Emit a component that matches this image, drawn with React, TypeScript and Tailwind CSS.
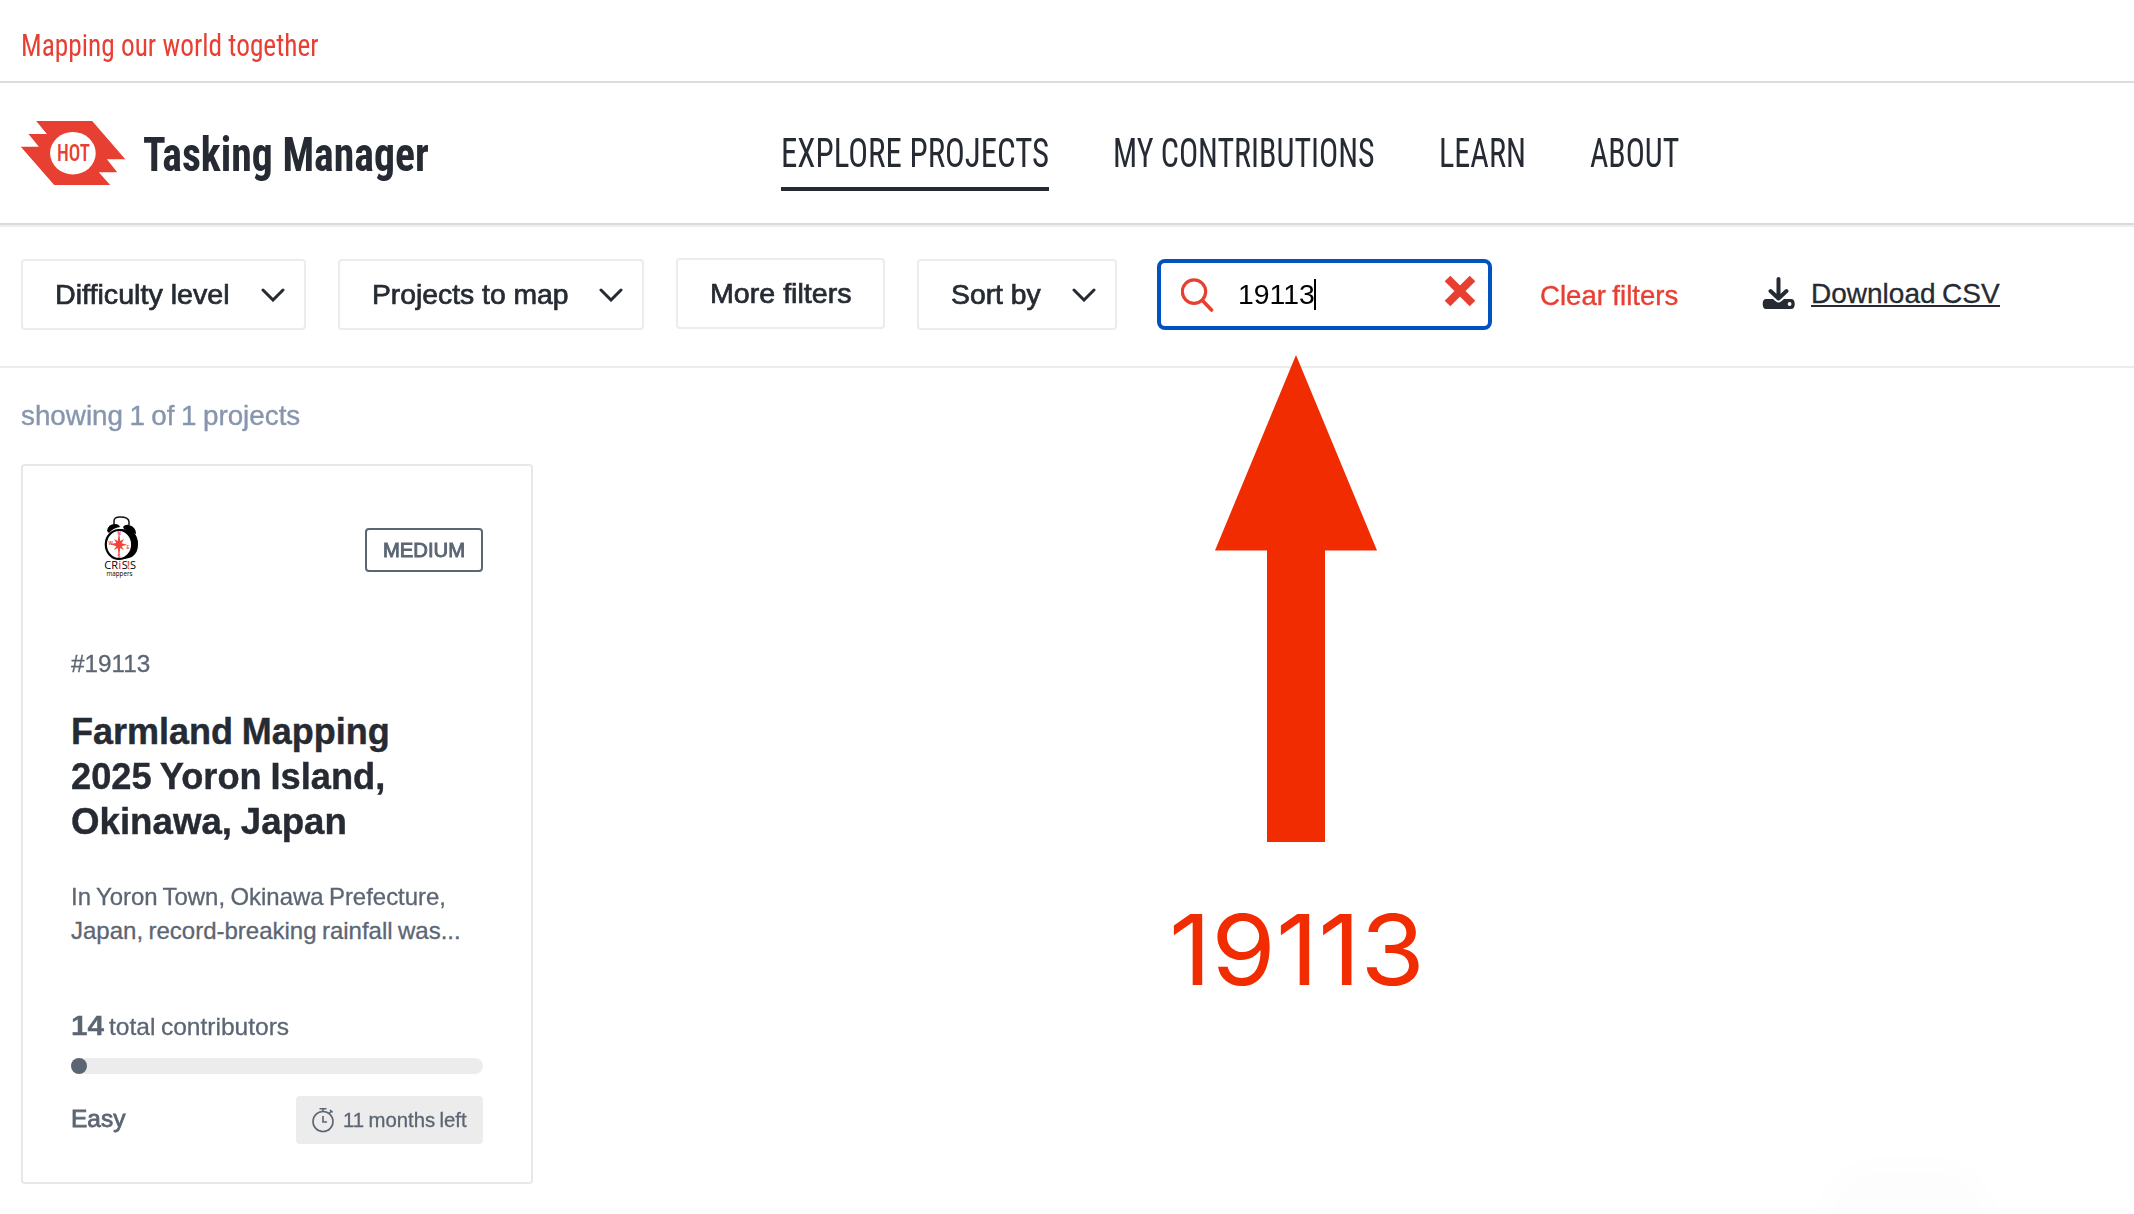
import { useLayoutEffect, useRef, useState, type ReactNode } from "react";

/* Renders a line of text stretched or condensed horizontally to a given width. */
function Fit({ width, className = "", children }: { width: number; className?: string; children: ReactNode }) {
  const ref = useRef<HTMLSpanElement>(null);
  const [scale, setScale] = useState(1);
  useLayoutEffect(() => {
    if (ref.current) setScale(width / ref.current.offsetWidth);
  }, [width]);
  return (
    <span className="block shrink-0" style={{ width }}>
      <span
        ref={ref}
        className={`inline-block origin-left whitespace-pre align-top ${className}`}
        style={{ transform: `scaleX(${scale})` }}
      >
        {children}
      </span>
    </span>
  );
}

const condensed = "font-['Roboto',sans-serif] [font-stretch:75%] [word-spacing:0px] [-webkit-text-stroke:0px]";

function HotLogo() {
  return (
    <svg className="h-16 w-[105px] shrink-0" viewBox="21.5 121 105 64">
      <path
        fill="#e83f33"
        d="M36.7 121H92.7L125.8 159.3H107.4L117.7 172.3H99.3L110.7 185H54.7L21.3 146.7H39.4L29 134H47.4Z"
      />
      <ellipse cx="73.4" cy="153.2" rx="22.8" ry="21.2" fill="#fff" />
      <text
        x="57.5"
        y="161.2"
        textLength="33"
        lengthAdjust="spacingAndGlyphs"
        fill="#e83f33"
        className="font-['Roboto',sans-serif] text-[23px] font-medium [font-stretch:75%]"
      >
        HOT
      </text>
    </svg>
  );
}

function Chevron() {
  return (
    <svg className="h-[14px] w-[24px] shrink-0" viewBox="0 0 24 14" fill="none" stroke="#262b33" strokeWidth="3">
      <path d="M2 2L12 12L22 2" strokeLinecap="round" />
    </svg>
  );
}

function Dropdown({ label, textWidth, className }: { label: string; textWidth: number; className: string }) {
  return (
    <button className={`flex h-[71px] items-center justify-between rounded-[4px] border-2 border-[#ececec] pr-[19px] ${className}`}>
      <Fit width={textWidth} className="text-[28px] leading-[70px] [-webkit-text-stroke:0.7px_#262b33]">
        {label}
      </Fit>
      <Chevron />
    </button>
  );
}

function CrisisMappersLogo() {
  return (
    <svg className="ml-[33px] h-[62px] w-[38px]" viewBox="0 0 38 62">
      <path d="M10 9V5Q10 1 16 1Q25 1 25 6V9" fill="none" stroke="#111" strokeWidth="1.5" />
      <path d="M3 15Q4 8 11 8Q15 8 16 11Q9 12 5 17Z" fill="#000" />
      <path d="M19 11Q21 8 25 9Q32 11 32 18L28 17Q24 14 20 13Z" fill="#000" />
      <path d="M15 13Q34 12 34 28Q34 43 18 43Z" fill="#000" />
      <ellipse cx="15" cy="28.5" rx="13.2" ry="14.5" fill="#fff" stroke="#000" strokeWidth="2.2" />
      <path
        fill="#f04438"
        d="M15 15L16.2 25L20 23L17.6 27.2L23 28.7L17.6 30.2L20 34L16.2 32L15 43L13.8 32L10 34L12.3 30.2L6 28L12.3 27L10 23L13.8 25Z"
      />
      <g fill="#f04438" className="font-['Liberation_Sans',sans-serif] text-[4.5px] font-bold">
        <text x="13.4" y="19">N</text>
        <text x="4.5" y="29">W</text>
        <text x="22.4" y="32.5">E</text>
        <text x="13.6" y="42">S</text>
      </g>
      <g className="font-['Open_Sans',sans-serif] text-[11px] [-webkit-text-stroke:0.3px_#000]">
        <text x="0.3" y="53">CR</text>
        <text x="17.8" y="53">S</text>
        <text x="26" y="53">S</text>
      </g>
      <g fill="#f04438" className="font-['Open_Sans',sans-serif] text-[11px] font-semibold [-webkit-text-stroke:0.3px_#f04438]">
        <text x="14.2" y="53">i</text>
        <text x="23" y="53">!</text>
      </g>
      <text
        x="2.5"
        y="59.5"
        textLength="26"
        lengthAdjust="spacingAndGlyphs"
        className="font-['Open_Sans',sans-serif] text-[7.5px] [-webkit-text-stroke:0.2px_#000]"
      >
        mappers
      </text>
    </svg>
  );
}

const navItems = [
  { label: "EXPLORE PROJECTS", width: 268, active: true },
  { label: "MY CONTRIBUTIONS", width: 262, active: false },
  { label: "LEARN", width: 87, active: false },
  { label: "ABOUT", width: 89, active: false },
];

function Header() {
  return (
    <header>
      <div className={`flex h-[83px] items-center border-b-2 border-[#dcdcdc] pt-[9px] pl-[21px] text-[32px] text-[#e83f33] ${condensed}`}>
        <Fit width={298}>Mapping our world together</Fit>
      </div>
      <div className="flex h-[142px] items-center border-b-2 border-[#d9dbda] pl-[21px] shadow-[0_2px_0_#eeeeee]">
        <HotLogo />
        <div className={`mt-[3px] ml-[17px] text-[48px] leading-[60px] font-bold ${condensed}`}>
          <Fit width={286}>Tasking Manager</Fit>
        </div>
        <nav className={`mt-[37px] ml-[352px] flex gap-[64px] self-start text-[40px] ${condensed}`}>
          {navItems.map((n) => (
            <a key={n.label} className={`h-[71px] leading-[68px] ${n.active ? "border-b-4 border-[#262b33]" : ""}`}>
              <Fit width={n.width}>{n.label}</Fit>
            </a>
          ))}
        </nav>
      </div>
    </header>
  );
}

function Filters() {
  return (
    <div className="mt-[2px] flex h-[141px] items-start border-b-2 border-[#ececec] pt-[32px] pl-[21px]">
      <Dropdown label="Difficulty level" textWidth={175} className="w-[285px] pl-[30px]" />
      <Dropdown label="Projects to map" textWidth={197} className="ml-[32px] w-[306px] pl-[31px]" />
      <button className="-mt-px ml-[32px] h-[71px] w-[209px] rounded-[4px] border-2 border-[#ececec] pl-[32px] text-left">
        <Fit width={141} className="text-[28px] leading-[68px] [-webkit-text-stroke:0.7px_#262b33]">
          More filters
        </Fit>
      </button>
      <Dropdown label="Sort by" textWidth={90} className="ml-[32px] w-[200px] pl-[31px]" />
      <div className="ml-[40px] flex h-[71px] w-[335px] items-center rounded-[8px] border-4 border-[#0053bf] bg-white pl-[20px]">
        <svg className="h-[34px] w-[34px]" viewBox="0 0 34 34" fill="none" stroke="#e83f33">
          <circle cx="13" cy="13.6" r="11.7" strokeWidth="3.2" />
          <path d="M21.5 22.5L30.5 32" strokeWidth="3.6" strokeLinecap="round" />
        </svg>
        <span className="ml-[23px]">
          <Fit width={77} className="text-[28px] leading-[64px] text-black">
            19113
          </Fit>
        </span>
        <span className="-ml-px h-[31px] w-[2px] bg-black" />
        <svg className="mb-[7px] ml-[128px] h-8 w-8" viewBox="0 0 32 32" stroke="#e83f33" strokeWidth="8">
          <path d="M3.5 3.5L28.5 28.5M28.5 3.5L3.5 28.5" />
        </svg>
      </div>
      <span className="ml-[48px] text-[28px] leading-[73px] text-[#e83f33] [-webkit-text-stroke:0.4px_#e83f33]">
        <Fit width={138}>Clear filters</Fit>
      </span>
      <svg className="mt-[18px] ml-[84px] h-[33px] w-[33px]" viewBox="0 0 33 33">
        <path
          fill="#262b33"
          d="M4 22H11L14 24.6Q16.5 26.4 19 24.6L22 22H29Q32.7 22 32.7 27Q32.7 32 29 32H4Q.7 32 .7 27Q.7 22 4 22Z"
        />
        <circle cx="27.6" cy="27" r="1.9" fill="#fff" />
        <path d="M16.5 2V20M8.5 14L16.5 21.5L24.5 14" fill="none" stroke="#262b33" strokeWidth="4" strokeLinecap="round" strokeLinejoin="round" />
      </svg>
      <a className="ml-[16px] h-[48px] border-b-2 border-[#262b33] text-[28px] leading-[70px] [-webkit-text-stroke:0.3px_#262b33]">
        <Fit width={189}>Download CSV</Fit>
      </a>
    </div>
  );
}

function ProjectCard() {
  return (
    <article className="mt-[28px] h-[720px] w-[512px] rounded-[4px] border-2 border-[#e8e8e8] px-[48px] pt-[50px] text-[24px] text-[#5c6673] [-webkit-text-stroke:0.3px_#5c6673]">
      <div className="flex h-[60px] items-start justify-between">
        <CrisisMappersLogo />
        <div className="mt-[12px] flex h-[44px] w-[118px] items-center justify-center rounded-[4px] border-2 border-[#5c6673] text-[20px]">
          <Fit width={82} className="[-webkit-text-stroke:0.9px_#5c6673]">
            MEDIUM
          </Fit>
        </div>
      </div>
      <div className="mt-[72px] leading-8">
        <Fit width={79}>#19113</Fit>
      </div>
      <h3 className="mt-[29px] text-[36px] leading-[45px] font-bold text-[#262b33] [-webkit-text-stroke:0.4px_#262b33]">
        <Fit width={319}>Farmland Mapping</Fit>
        <Fit width={314}>2025 Yoron Island,</Fit>
        <Fit width={276}>Okinawa, Japan</Fit>
      </h3>
      <div className="mt-[36px] leading-[34px]">
        <Fit width={375}>In Yoron Town, Okinawa Prefecture,</Fit>
        <Fit width={390}>Japan, record-breaking rainfall was...</Fit>
      </div>
      <div className="mt-[60px] flex h-[36px] items-start">
        <Fit width={33} className="text-[28px] leading-[36px] font-bold">
          14
        </Fit>
        <span className="ml-[5px] leading-[38px]">
          <Fit width={180}>total contributors</Fit>
        </span>
      </div>
      <div className="mt-[14px] h-4 rounded-full bg-[#ececec]">
        <div className="h-4 w-4 rounded-full bg-[#5c6673]" />
      </div>
      <div className="mt-[22px] flex h-12 items-center justify-between">
        <div className="mb-[3px]">
          <Fit width={54} className="[-webkit-text-stroke:0.8px_#5c6673]">
            Easy
          </Fit>
        </div>
        <div className="flex h-12 w-[187px] items-center rounded-[4px] bg-[#ececec] pl-[15px] text-[20px]">
          <svg className="h-[26px] w-[24px]" viewBox="0 0 24 26" fill="none" stroke="#5c6673" strokeWidth="1.6">
            <circle cx="12" cy="14.5" r="10" />
            <path d="M12 9V15H16M8.5 1.7H15.5M12 2V5M19 3L21.6 5.4M20.3 4.2L18 6.5" />
          </svg>
          <span className="ml-[8px]">
            <Fit width={124}>11 months left</Fit>
          </span>
        </div>
      </div>
    </article>
  );
}

/* Pointer and caption laid over the page to call out the search box. */
function Callout() {
  return (
    <div className="absolute top-[355px] left-[1172px] flex w-[248px] flex-col items-center text-[#f02c00]">
      <svg className="h-[488px] w-[162px]" viewBox="0 0 162 488" fill="currentColor">
        <path d="M81 0L162 195.5H110V487H52V195.5H0Z" />
      </svg>
      <div className="mt-[38px] ml-[2px] font-['Inter',sans-serif] text-[98px] leading-[138px]">
        <Fit width={256}>19113</Fit>
      </div>
    </div>
  );
}

export default function App() {
  return (
    <div className="relative h-[1214px] w-[2134px] overflow-hidden bg-white font-['Liberation_Sans',Arial,sans-serif] text-[#262b33] [word-spacing:-0.08em]">
      <Header />
      <Filters />
      <main className="pt-[28px] pl-[21px]">
        <div className="text-[28px] leading-10 text-[#8796ae] [-webkit-text-stroke:0.4px_#8796ae]">
          <Fit width={279}>showing 1 of 1 projects</Fit>
        </div>
        <ProjectCard />
      </main>
      <Callout />
      <div className="absolute top-[1164px] left-[1822px] h-[120px] w-[170px] rounded-full bg-black/[0.006] blur-md" />
    </div>
  );
}
